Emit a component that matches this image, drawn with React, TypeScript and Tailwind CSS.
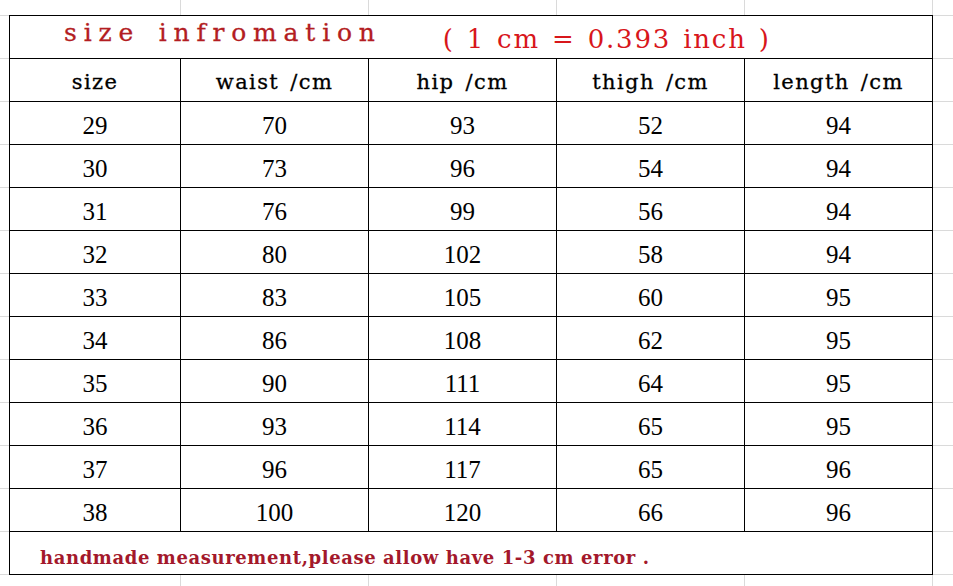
import React from 'react';

const headers = ['size', 'waist /cm', 'hip /cm', 'thigh /cm', 'length /cm'];

const rows: number[][] = [
  [29, 70, 93, 52, 94],
  [30, 73, 96, 54, 94],
  [31, 76, 99, 56, 94],
  [32, 80, 102, 58, 94],
  [33, 83, 105, 60, 95],
  [34, 86, 108, 62, 95],
  [35, 90, 111, 64, 95],
  [36, 93, 114, 65, 95],
  [37, 96, 117, 65, 96],
  [38, 100, 120, 66, 96],
];

export default function App() {
  return (
    <div className="w-[953px] h-[586px] overflow-hidden bg-white pl-[9px] pt-[15px] bg-[linear-gradient(to_right,#dadada_1px,transparent_1px),linear-gradient(to_bottom,#dadada_1px,transparent_1px)] bg-size-[188px_43px] bg-position-[180px_15px]">
      <div className="w-[924px] border-l border-t border-black bg-white">
        {/* title row */}
        <div className="h-[43px] border-r border-b border-black flex items-center whitespace-pre font-['DejaVu_Serif',serif]">
          <span className="ml-[54px] -mt-[8px] text-[25px] tracking-[6.8px] [word-spacing:4px] text-[#b31d22] [-webkit-text-stroke:0.3px_#b31d22]">
            size infromation
          </span>
          <span className="ml-[61px] mt-[4px] text-[26px] tracking-[1.8px] [word-spacing:2px] text-[#d8161b]">
            ( 1 cm = 0.393 inch )
          </span>
        </div>

        {/* header row */}
        <div className="grid grid-cols-[171px_188px_188px_188px_188px]">
          {headers.map(h => (
            <div
              key={h}
              className="h-[43px] border-r border-b border-black flex items-center justify-center pt-[6px] whitespace-pre font-['DejaVu_Serif',serif] text-[21px] tracking-[1.4px] [word-spacing:3px] text-black [-webkit-text-stroke:0.3px_black]"
            >
              {h}
            </div>
          ))}
        </div>

        {/* data rows */}
        {rows.map(r => (
          <div key={r[0]} className="grid grid-cols-[171px_188px_188px_188px_188px]">
            {r.map((v, i) => (
              <div
                key={i}
                className="h-[43px] border-r border-b border-black flex items-center justify-center pt-[5px] font-['Liberation_Serif',serif] text-[25px] text-black"
              >
                {v}
              </div>
            ))}
          </div>
        ))}

        {/* footer note */}
        <div className="h-[43px] border-r border-b border-black flex items-center pl-[30px] pt-[9px] whitespace-pre font-['DejaVu_Serif',serif] font-bold text-[18px] tracking-[0.6px] text-[#a3182b]">
          handmade measurement,please allow have 1-3 cm error .
        </div>
      </div>
    </div>
  );
}
